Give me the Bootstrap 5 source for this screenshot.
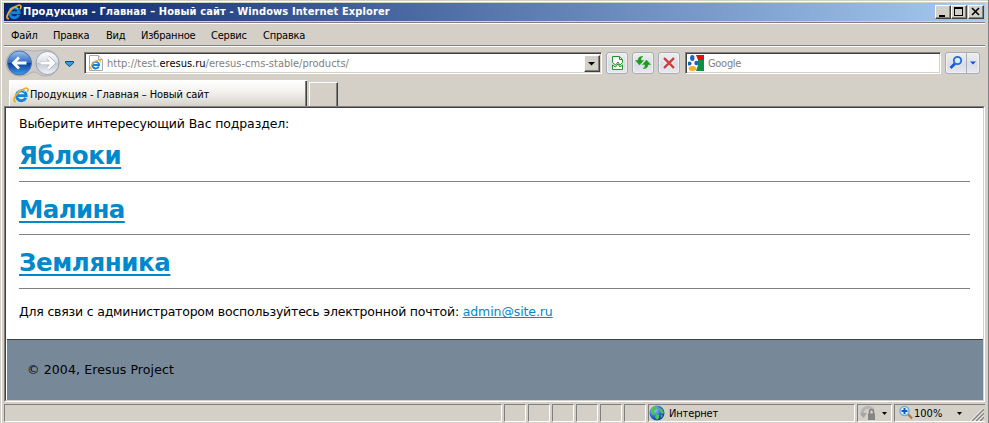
<!DOCTYPE html>
<html lang="ru">
<head>
<meta charset="utf-8">
<title>Продукция - Главная – Новый сайт</title>
<link rel="stylesheet" href="https://cdn.jsdelivr.net/npm/bootstrap@5.3.0/dist/css/bootstrap.min.css">
<style>
html,body{height:423px;overflow:hidden}
body{background:#d4d0c8;color:#000;font:11px/14px "DejaVu Sans Condensed","DejaVu Sans",sans-serif;font-stretch:condensed}
svg{display:block;flex:none}
.win{height:423px;border-left:1px solid #d4d0c8;border-right:1px solid #808080;padding:3px 3px 0 3px;background:linear-gradient(90deg,#fff 1px,transparent 1px),linear-gradient(#d4d0c8 1px,#fff 1px,#fff 2px,#d4d0c8 2px)}
.win>*{flex:none}
.titlebar{height:18px;margin-bottom:1px;background:linear-gradient(90deg,#0a246a,#a6caf0);color:#fff;font-weight:700;letter-spacing:.12px;padding:0 1px 0 2px;gap:1px}
.etch{height:2px;background:linear-gradient(#808080 1px,#fff 1px)}
.raised{background:#d4d0c8;border:1px solid;border-color:#fff #404040 #404040 #fff;box-shadow:inset -1px -1px #808080}
.capbtn{width:16px;height:14px}
.menurow{height:21px;padding:2px 0 0 7px;letter-spacing:-.2px}
.menurow span:nth-child(1){width:42px}
.menurow span:nth-child(2){width:53px}
.menurow span:nth-child(3){width:35px}
.menurow span:nth-child(4){width:70px}
.menurow span:nth-child(5){width:52px}
.toolrow{height:32px}
.sunk{height:22px;background:#fff;border:1px solid;border-color:#808080 #fff #fff #808080;box-shadow:inset 1px 1px #404040,inset -1px -1px #d4d0c8}
.sunk span{padding-top:2px}
.addr{width:518px;padding:2px 1px 2px 3px;color:#808080;margin-left:8px}
.addr b{font-weight:400;color:#000}
.gbox{width:256px;margin-left:5px;padding:1px 2px;gap:4px;color:#808080;letter-spacing:-.3px}
.dropbtn{width:16px;height:17px}
.tbtn{width:22px;height:22px;border:1px solid #a9adb8;border-radius:3px;background:linear-gradient(#eeeeec,#d9dde9 60%,#e9e9ec);box-shadow:inset 0 0 0 1px #f1f1f1}
.gobtn{width:35px;margin-left:4px}
.tabsrow{height:27px;padding-left:5px}
.tab1{width:298px;height:26px;background:linear-gradient(#fff,#f2f1ee 45%,#d6d3cb);border:1px solid #fff;border-width:1px 0 0 1px;box-shadow:inset -1px 0 #404040,inset -2px 0 #808080;padding:2px 0 0 3px;gap:1px;letter-spacing:-.08px}
.tab2{width:29px;height:24px;margin-left:2px;border:1px solid #fff;border-right:1px solid #404040;border-bottom:0;box-shadow:inset -1px 0 #808080}
.view{height:296px;width:981px;border:1px solid;border-color:#808080 #fff #fff #808080;font-family:"DejaVu Sans",sans-serif;font-stretch:normal;font-size:12.5px;line-height:16px}
.viewin{height:294px;border:1px solid;border-color:#404040 #d4d0c8 #d4d0c8 #404040;background:#fff;padding-left:1px}
.view a{color:#08c;text-decoration:underline}
.doc{height:231px;padding:8px 13px 0 12px}
.intro{letter-spacing:-.13px}
.doc h2{font-size:24.5px;line-height:32px;font-weight:700;margin:12px 0 9px;letter-spacing:-.4px}
.intro+h2{margin-top:8px}
.doc h2.second{margin-bottom:8px;letter-spacing:-.62px}
.doc h2 a{text-decoration-thickness:2px;text-underline-offset:3px;text-decoration-skip-ink:none}
.doc hr{height:1px;background:#808080;border:0;opacity:1;margin:0}
.contact{margin-top:15px;letter-spacing:-.2px}
.contact a{letter-spacing:-.1px;text-underline-offset:1px;text-decoration-skip-ink:none}
.foot{height:61px;background:#789;border-top:1px solid #404040;padding:22px 0 0 20px;letter-spacing:.12px}
.status{height:19px;margin-top:2px;gap:2px}
.pane{height:18px;border:1px solid;border-color:#808080 #fff #fff #808080;flex:none;width:22px}
.pane span{padding-top:1px}
.p-first{width:498px}
.p-zone{width:207px;gap:4px;letter-spacing:-.15px}
.p-lock{width:35px;padding-left:2px}
.p-zoom{width:91px;padding-left:4px;border-right:0}
</style>
</head>
<body>
<svg width="0" height="0" class="position-absolute"><defs>
<linearGradient id="bl" x1="0" y1="0" x2="0" y2="1"><stop offset="0" stop-color="#9fc3ee"/><stop offset=".48" stop-color="#2f6cc4"/><stop offset=".52" stop-color="#0c3f9c"/><stop offset="1" stop-color="#3fa0ea"/></linearGradient>
<linearGradient id="gr" x1="0" y1="0" x2="0" y2="1"><stop offset="0" stop-color="#fff"/><stop offset=".5" stop-color="#d8dde4"/><stop offset=".52" stop-color="#c2c8d2"/><stop offset="1" stop-color="#f2f5f8"/></linearGradient>
<radialGradient id="globe" cx=".35" cy=".3" r=".75"><stop offset="0" stop-color="#9cc8ff"/><stop offset=".6" stop-color="#2a6ad8"/><stop offset="1" stop-color="#123c90"/></radialGradient>
<symbol id="ie" viewBox="0 0 16 16"><path d="M12.8 10.800A4.900 4.900 0 1 1 13.200 8.600H5" fill="none" stroke="#1583d8" stroke-width="2.800"/><path d="M12 4.800A5 5 0 0 0 4 5.800" fill="none" stroke="#7dd0fa" stroke-width="1.200"/><path d="M3 14.700C-1 15 1.400 9 5.600 5.200S14.800 0 15 2.400c.1 1-.4 1.800-.9 2.500" fill="none" stroke="#f2ac1c" stroke-width="1.700"/></symbol>
</defs></svg>
<div class="win d-flex flex-column">
<div class="titlebar d-flex align-items-center"><svg width="16" height="16"><use href="#ie"/></svg><span class="me-auto">Продукция - Главная – Новый сайт - Windows Internet Explorer</span>
<div class="d-flex"><div class="raised capbtn"><svg width="14" height="12"><path d="M3 9h6v2H3z"/></svg></div><div class="raised capbtn"><svg width="14" height="12"><path d="M2 1h9v9H2zM3 3v6h7V3z" fill-rule="evenodd"/></svg></div></div><div class="raised capbtn"><svg width="14" height="12"><path d="M3 2l7 7M10 2L3 9" stroke="#000" stroke-width="1.600"/></svg></div></div>
<div class="etch"></div>
<div class="menurow d-flex align-items-center"><span>Файл</span><span>Правка</span><span>Вид</span><span>Избранное</span><span>Сервис</span><span>Справка</span></div>
<div class="etch"></div>
<div class="toolrow d-flex align-items-center">
<svg width="72" height="30" viewBox="4 48 72 30"><path d="M19 50c10 0 12 1 15 1s4-1 12-1a13 13 0 0 1 0 26c-8 0-8-4-12-4s-5 4-15 4a13 13 0 0 1 0-26z" fill="#c9c9c9" stroke="#b0b0b0"/><circle cx="19.500" cy="63" r="12" fill="url(#bl)" stroke="#4f6fa6"/><path d="M26.500 63h-12M19 57.500L13.500 63l5.500 5.500" fill="none" stroke="#fff" stroke-width="2.800"/><circle cx="47.500" cy="63" r="11.500" fill="url(#gr)" stroke="#9aa2b0"/><path d="M40.500 63h12M48 57.500l5.500 5.500-5.500 5.500" fill="none" stroke="#a4abb8" stroke-width="4"/><path d="M40.500 63h12M48 57.500l5.500 5.500-5.500 5.500" fill="none" stroke="#fff" stroke-width="2.800"/><path d="M65.500 61.500h8v1.500l-4 3.500-4-3.500z" fill="#2b9fe0" stroke="#0d4c88"/></svg>
<div class="sunk addr d-flex align-items-center"><svg width="16" height="17" style="margin-right:3px"><path d="M1.500.5h9l4 4v11h-13z" fill="#fff" stroke="#aaa"/><path d="M10.500.5v4h4" fill="#eee" stroke="#aaa"/><use href="#ie" x="2" y="4" width="11" height="11"/></svg><span class="me-auto">http://test.<b>eresus.ru</b>/eresus-cms-stable/products/</span><div class="raised dropbtn"><svg width="14" height="15"><path d="M3 6h7L6.500 9.500z"/></svg></div></div>
<div class="d-flex gap-1 ms-1"><div class="tbtn"><svg width="20" height="20"><path d="M5.500 3.500h7l3 3v3l-2.500 2.500-2-3-2.500 3-3-2.500zM5.500 12l3 2 2.500-3 2 3 2.500-2v4.500h-10z" fill="#fff" stroke="#299329"/><path d="M12.500 3.500v3h3" fill="none" stroke="#299329"/></svg></div>
<div class="tbtn"><svg width="20" height="20"><path d="M2.500 7.500L6.500 12l4-4.500H8V5l2-1.500C7 3 5 4.500 5 7.500zM17.500 11.500L13.500 7l-4 4.500H12V14l-2 1.500c3 .5 5-1 5-4z" fill="#219a21" stroke="#219a21" stroke-width=".5"/></svg></div>
<div class="tbtn"><svg width="20" height="20"><path d="M5 5l10 10M15 5L5 15" stroke="#fff" stroke-width="4.500"/><path d="M5 5l10 10M15 5L5 15" stroke="#c94545" stroke-width="2.600"/></svg></div></div>
<div class="sunk d-flex align-items-center gbox"><svg width="16" height="16"><path d="M8 0h8v5H8z" fill="#e01010"/><path d="M9 5h7v11H7z" fill="#109040"/><path d="M0 0h8l2 5v5l-2 6H0z" fill="#fff"/><ellipse cx="4.300" cy="3" rx="2.200" ry="2.900" fill="#2060c8"/><circle cx="8.500" cy="8" r="2.200" fill="#2060c8"/><circle cx="1.500" cy="8.500" r="2" fill="#2060c8"/><ellipse cx="4.500" cy="13.500" rx="3.800" ry="2.500" fill="#f4b020"/></svg><span>Google</span></div>
<div class="tbtn gobtn"><svg width="33" height="20"><path d="M20.500 0v20" stroke="#a9adb8"/><path d="M9 10.500L4.500 15" stroke="#1458d8" stroke-width="2.600"/><circle cx="11.500" cy="7.500" r="3.700" fill="#d8ecff" stroke="#2468e0" stroke-width="1.800"/><path d="M24 8.500h6l-3 3z" fill="#1050d8"/></svg></div>
</div>
<div class="tabsrow d-flex align-items-end"><div class="tab1 d-flex align-items-center"><svg width="16" height="16"><use href="#ie"/></svg><span>Продукция - Главная – Новый сайт</span></div><div class="tab2"></div></div>
<div class="view"><div class="viewin"><div class="doc"><div class="intro">Выберите интересующий Вас подраздел:</div>
<h2><a href="#">Яблоки</a></h2><hr>
<h2 class="second"><a href="#">Малина</a></h2><hr>
<h2><a href="#">Земляника</a></h2><hr>
<div class="contact">Для связи с администратором воспользуйтесь электронной почтой: <a href="#">admin@site.ru</a></div>
</div><div class="foot">© 2004, Eresus Project</div></div></div>
<div class="status d-flex"><div class="pane p-first"></div><div class="pane"></div><div class="pane"></div><div class="pane"></div><div class="pane"></div><div class="pane"></div><div class="pane"></div>
<div class="pane p-zone d-flex align-items-center"><svg width="16" height="16"><circle cx="8" cy="8" r="7.500" fill="url(#globe)"/><path d="M2 4c2-3 5-3 6-2l-1 3-2 1 1 3-2 1-2-2zM10 3l3 1 2 4-2 1-2-3zM7 9l3 1v3l-2 2-2-3zM12 10l2 .5-2 2.500z" fill="#4cc840"/></svg><span>Интернет</span></div>
<div class="pane p-lock"><svg width="30" height="16"><path d="M3 11a5.500 5.500 0 0 1 10-6" fill="none" stroke="#b4b4b4" stroke-width="3"/><path d="M0 8h7l-3.500 5z" fill="#a4a4a4"/><path d="M9.500 9V6.500a2 2 0 0 1 4 0V9" fill="none" stroke="#808080" stroke-width="1.500"/><path d="M8 8.500h7V15H8z" fill="#858585"/><path d="M22 7h5l-2.500 3z"/></svg></div>
<div class="pane p-zoom d-flex align-items-center"><svg width="15" height="16"><path d="M8.500 8.500l4.500 5" stroke="#b87838" stroke-width="2.500"/><circle cx="5.500" cy="6" r="4.500" fill="#e4f4ff" stroke="#6ca8dc" stroke-width="1.400"/><path d="M5.500 3v6M2.500 6h6" stroke="#1458c8" stroke-width="2"/></svg><span>100%</span><svg width="42" height="16"><path d="M15 7h5l-2.500 3z"/><path d="M30 16L42 4M34 16l8-8M38 16l4-4" stroke="#808080" stroke-width="1.500"/><path d="M28.500 16L42 2.500M32.500 16L42 6.500M36.500 16l5.500-5.500" stroke="#fff" stroke-width=".8"/></svg></div></div>
</div>
</body>
</html>
